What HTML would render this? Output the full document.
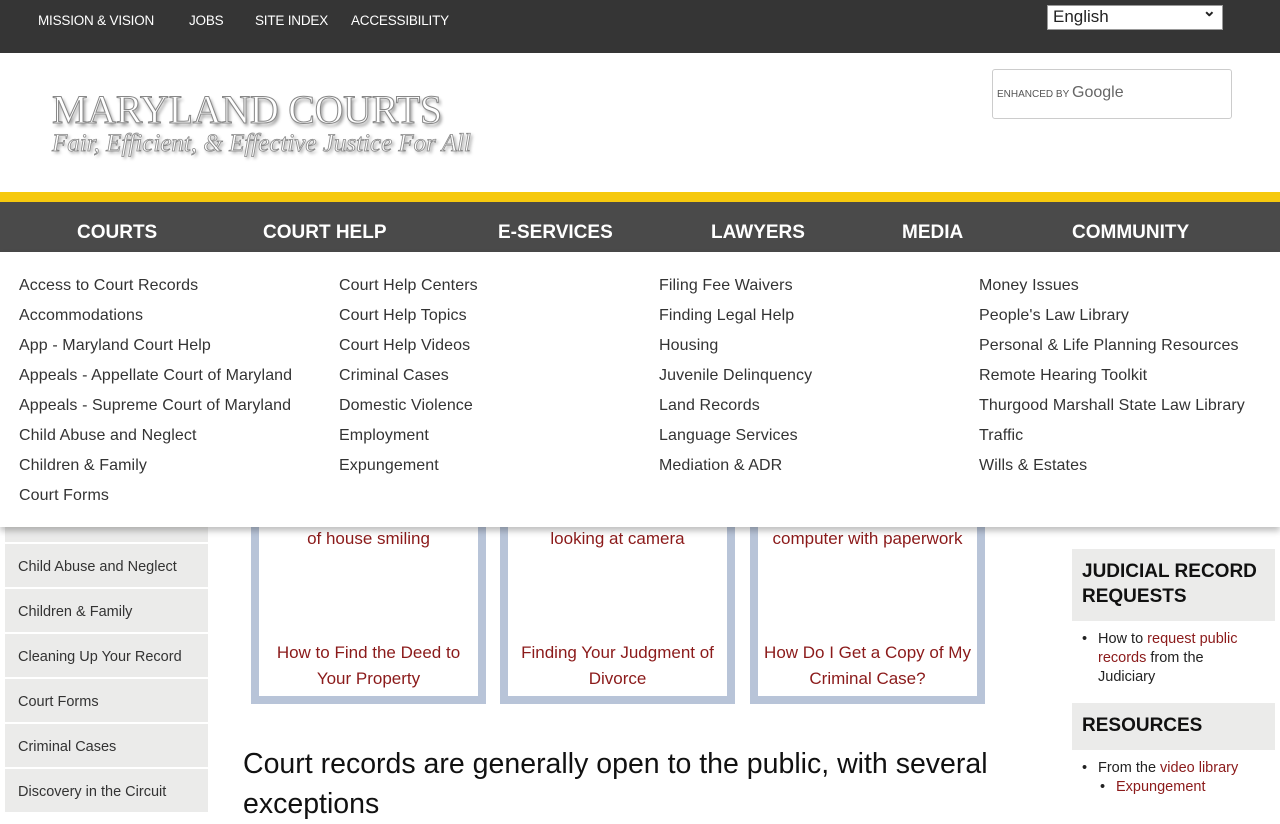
<!DOCTYPE html>
<html><head><meta charset="utf-8"><style>
*{margin:0;padding:0;box-sizing:border-box}
body{width:1280px;height:800px;overflow:hidden;background:#fff;font-family:"Liberation Sans",sans-serif;position:relative;color:#222}
.top{position:absolute;left:0;top:0;width:1280px;height:53px;background:#353535}
.top a{position:absolute;top:13px;color:#fff;font-size:13.5px;text-decoration:none;letter-spacing:-0.2px}
.lang{position:absolute;left:1047px;top:5px;width:176px;height:25px;background:#fff;border:1px solid #999;font-size:17px;padding:1px 5px;color:#222}
.lang:after{content:"⌄";position:absolute;right:6px;top:-5px;font-weight:bold;font-size:16px}
.logo1{position:absolute;left:52px;top:86px;font-family:"Liberation Serif",serif;font-size:40px;color:#fff;letter-spacing:-0.3px;-webkit-text-stroke:1px #888;text-shadow:2px 3px 3px #999}
.logo2{position:absolute;left:52px;top:130px;font-family:"Liberation Serif",serif;font-style:italic;font-size:25px;color:#fff;-webkit-text-stroke:0.8px #888;text-shadow:2px 2px 3px #999}
.search{position:absolute;left:992px;top:69px;width:240px;height:50px;border:1px solid #ccc;border-radius:3px}
.search span{position:absolute;left:4px;top:19px;font-size:10px;color:#555}
.search b{position:absolute;left:79px;top:14px;font-size:16px;color:#666;font-weight:normal}
.yellow{position:absolute;left:0;top:192px;width:1280px;height:10px;background:#f6c90e}
.nav{position:absolute;left:0;top:202px;width:1280px;height:50px;background:#4a4a4a}
.nav a{position:absolute;top:20px;color:#fff;font-size:19px;font-weight:bold;text-decoration:none}
.menu{position:absolute;left:0;top:252px;width:1280px;height:275px;background:#fff;box-shadow:0 4px 6px rgba(0,0,0,.25);z-index:5}
.col{position:absolute;top:19px;font-size:16px;color:#333;line-height:30px;letter-spacing:0.1px}
.left{position:absolute;left:5px;top:499px;width:203px}
.left div{height:43px;background:#ebebea;margin-bottom:2px;font-size:14.5px;color:#333;padding:15px 0 0 13px}
.card{position:absolute;top:480px;width:235px;height:224px;border:8px solid #b8c4d8;background:#fff;color:#8b1a1a;font-size:17px;text-align:center;line-height:26px}
.card .a{position:absolute;top:38px;width:100%}
.card .b{position:absolute;top:152px;width:100%}
h1{position:absolute;left:243px;top:744px;font-weight:normal;font-size:28.5px;color:#111;line-height:40px;width:780px}
.rbox{position:absolute;left:1072px;width:203px;background:#ebebea;font-weight:bold;font-size:19px;padding:10px 10px;line-height:25px;color:#111}
.rl{position:absolute;left:1098px;font-size:14.5px;line-height:19px;color:#222;width:150px}
.rl:before{content:"•";position:absolute;left:-16px}
.red{color:#8b1a1a}
</style></head><body>
<div class="top">
<a style="left:38px">MISSION &amp; VISION</a><a style="left:189px">JOBS</a><a style="left:255px">SITE INDEX</a><a style="left:351px">ACCESSIBILITY</a>
<div class="lang">English</div>
</div>
<div class="logo1">MARYLAND COURTS</div>
<div class="logo2">Fair, Efficient, &amp; Effective Justice For All</div>
<div class="search"><span>ENHANCED BY</span><b>Google</b></div>
<div class="yellow"></div>
<div class="nav"><a style="left:77px">COURTS</a><a style="left:263px">COURT HELP</a><a style="left:498px">E-SERVICES</a><a style="left:711px">LAWYERS</a><a style="left:902px">MEDIA</a><a style="left:1072px">COMMUNITY</a></div>
<div class="menu">
<div class="col" style="left:19px">Access to Court Records<br>Accommodations<br>App - Maryland Court Help<br>Appeals - Appellate Court of Maryland<br>Appeals - Supreme Court of Maryland<br>Child Abuse and Neglect<br>Children &amp; Family<br>Court Forms</div>
<div class="col" style="left:339px">Court Help Centers<br>Court Help Topics<br>Court Help Videos<br>Criminal Cases<br>Domestic Violence<br>Employment<br>Expungement</div>
<div class="col" style="left:659px">Filing Fee Waivers<br>Finding Legal Help<br>Housing<br>Juvenile Delinquency<br>Land Records<br>Language Services<br>Mediation &amp; ADR</div>
<div class="col" style="left:979px">Money Issues<br>People's Law Library<br>Personal &amp; Life Planning Resources<br>Remote Hearing Toolkit<br>Thurgood Marshall State Law Library<br>Traffic<br>Wills &amp; Estates</div>
</div>
<div class="left">
<div></div><div>Child Abuse and Neglect</div><div>Children &amp; Family</div><div>Cleaning Up Your Record</div><div>Court Forms</div><div>Criminal Cases</div><div>Discovery in the Circuit</div>
</div>
<div class="card" style="left:251px"><div class="a">of house smiling</div><div class="b">How to Find the Deed to<br>Your Property</div></div>
<div class="card" style="left:500px"><div class="a">looking at camera</div><div class="b">Finding Your Judgment of<br>Divorce</div></div>
<div class="card" style="left:750px"><div class="a">computer with paperwork</div><div class="b">How Do I Get a Copy of My<br>Criminal Case?</div></div>
<h1>Court records are generally open to the public, with several exceptions</h1>
<div class="rbox" style="top:549px;height:72px">JUDICIAL RECORD<br>REQUESTS</div>
<div class="rl" style="top:630px">How to <span class="red">request public records</span> from the Judiciary</div>
<div class="rbox" style="top:703px;height:47px">RESOURCES</div>
<div class="rl" style="top:759px">From the <span class="red">video library</span></div>
<div class="rl" style="top:778px;left:1116px"><span class="red">Expungement</span></div>
</body></html>
